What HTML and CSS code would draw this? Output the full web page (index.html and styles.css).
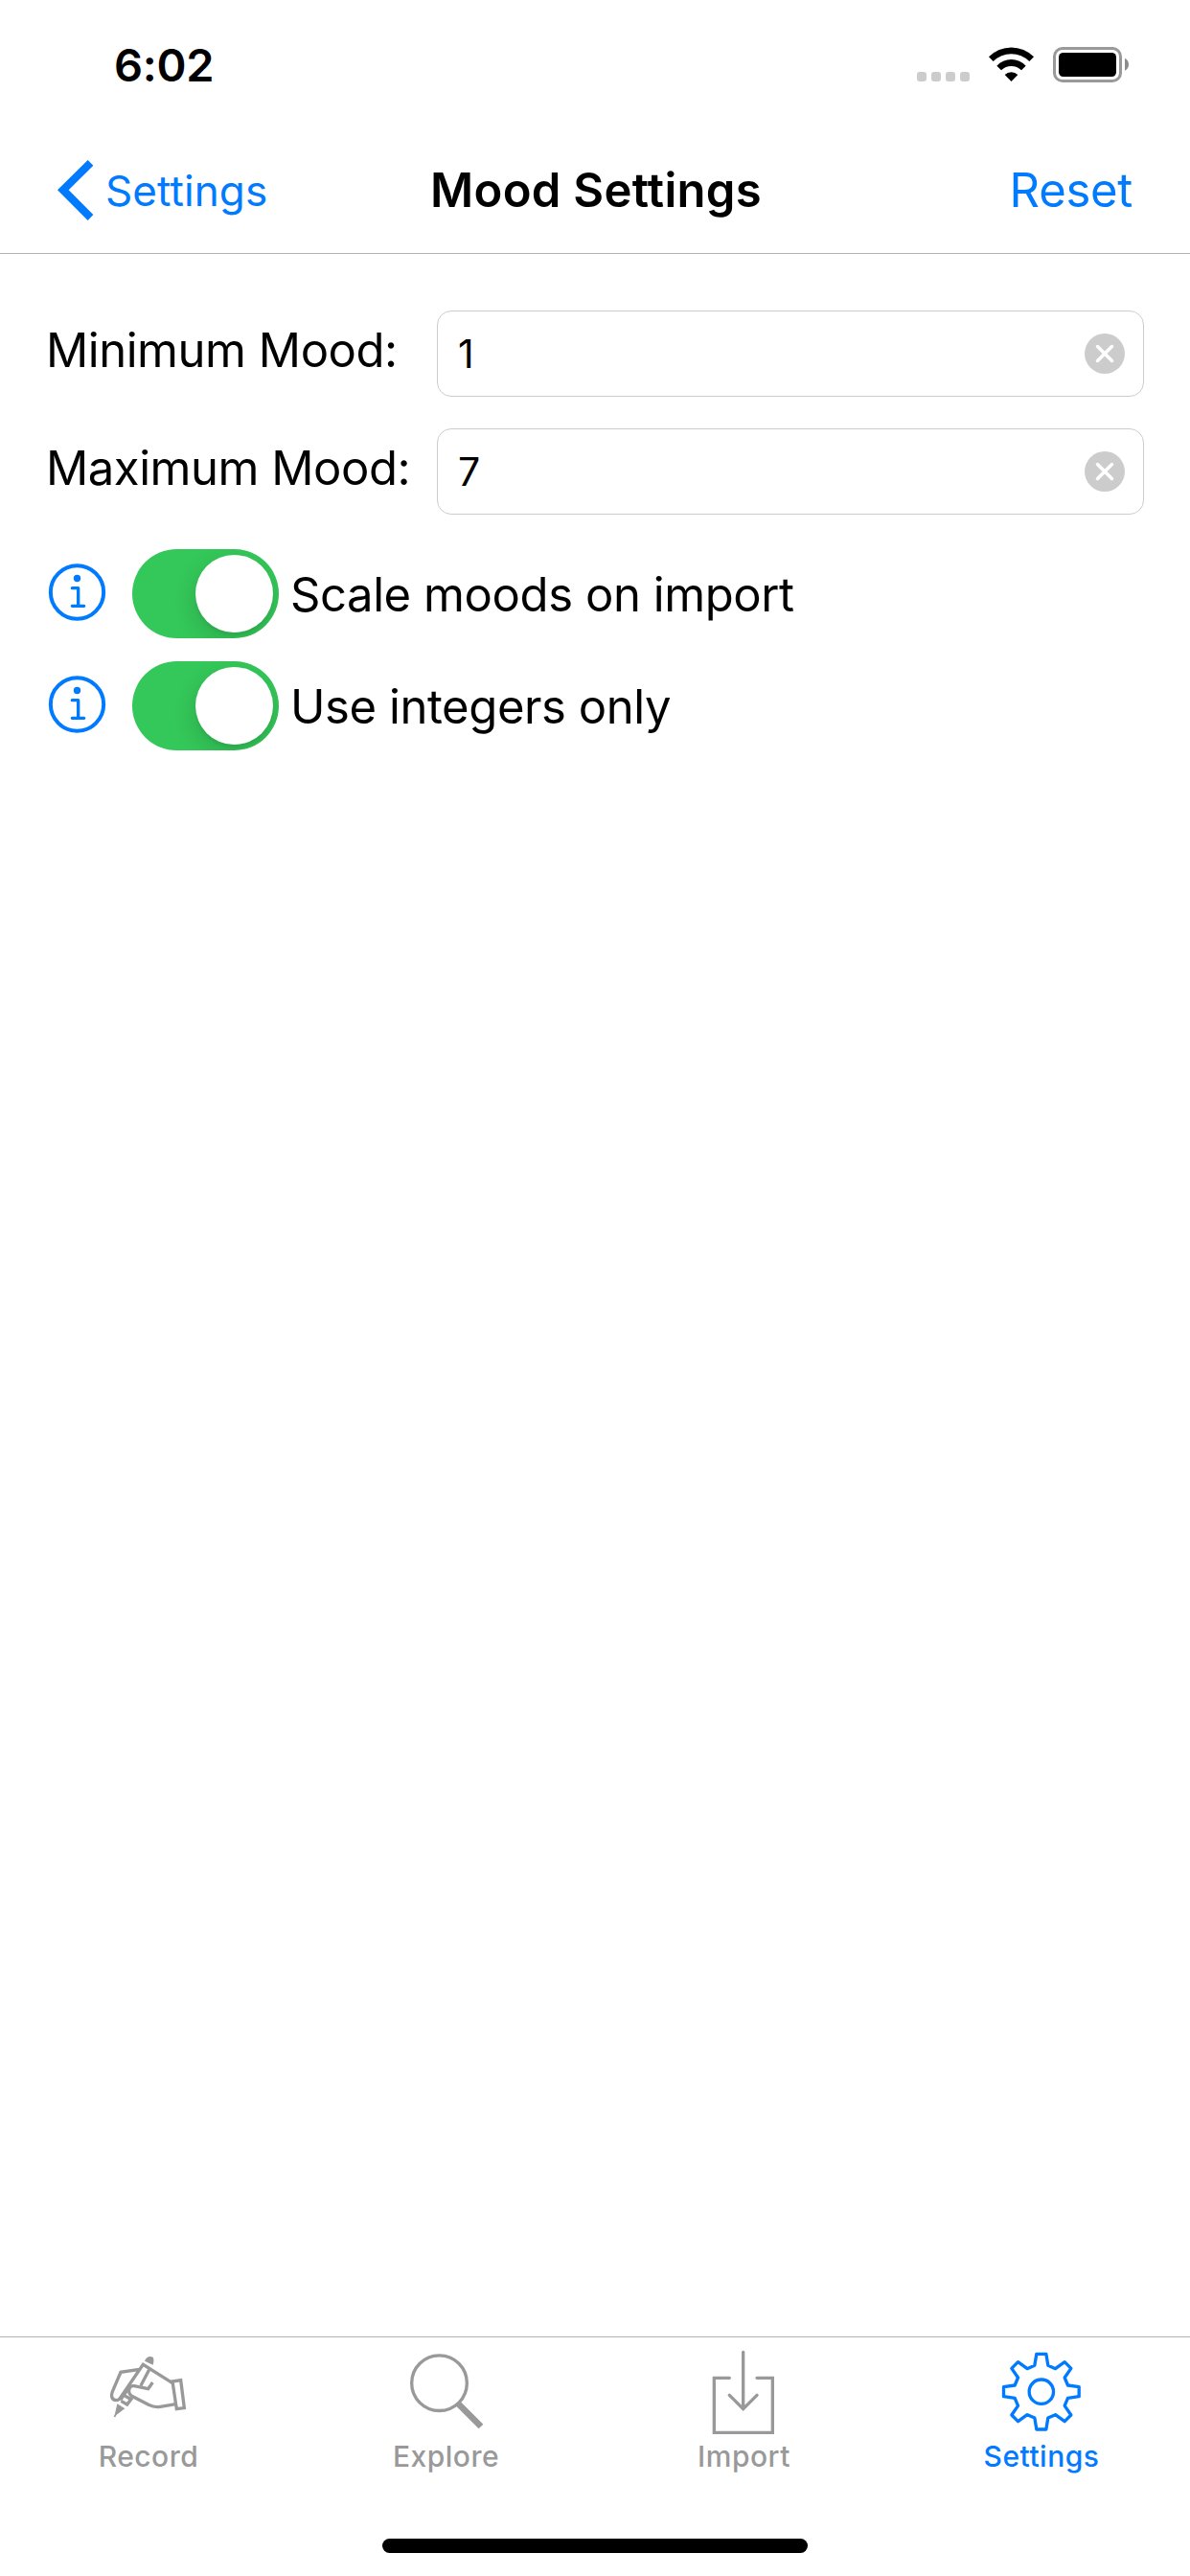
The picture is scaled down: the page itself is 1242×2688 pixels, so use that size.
FILE: index.html
```
<!DOCTYPE html>
<html lang="en">
<head>
<meta charset="utf-8">
<title>Mood Settings</title>
<link rel="stylesheet" href="styles.css">
</head>
<body>
<div class="screen">
  <header class="statusbar">
    <div class="time">6:02</div>
    <svg class="status-icons" viewBox="105 81 675 120">
      <g fill="#ccc">
        <rect x="111" y="165" width="30" height="30" rx="9"/>
        <rect x="156" y="165" width="30" height="30" rx="9"/>
        <rect x="201" y="165" width="30" height="30" rx="9"/>
        <rect x="246" y="165" width="30" height="30" rx="9"/>
      </g>
      <path d="M336 118A99 99 0 0 1 477 118L463 132A80 80 0 0 0 350 132Z"/>
      <path d="M361 146A62 62 0 0 1 452 146L438 160A44 44 0 0 0 375 160Z"/>
      <path d="M386 174A30 30 0 0 1 427 174L406.500 195Z"/>
      <rect x="541.500" y="91.500" width="207" height="102" rx="25" fill="none" stroke="#999" stroke-width="9"/>
      <rect x="555" y="105" width="180" height="75" rx="14"/>
      <path d="M762 122Q774 129 774 142Q774 155 762 161Z" fill="#8c8c8c"/>
    </svg>
  </header>

  <nav class="navbar">
    <a class="back">
      <svg class="chevron" viewBox="180 498 114 195"><path d="M275 501L292 518L215 595L292 672L275 690L180 595Z"/></svg>
      <span>Settings</span>
    </a>
    <h1 class="title">Mood Settings</h1>
    <a class="reset">Reset</a>
  </nav>

  <main class="content">
    <div class="field">
      <label class="field-label">Minimum Mood:</label>
      <div class="input">
        <span>1</span>
        <svg class="clear" viewBox="0 0 42 42"><circle cx="21" cy="21" r="21"/><path d="M13.500 13.500L28.500 28.500M28.500 13.500L13.500 28.500"/></svg>
      </div>
    </div>
    <div class="field">
      <label class="field-label">Maximum Mood:</label>
      <div class="input">
        <span>7</span>
        <svg class="clear" viewBox="0 0 42 42"><circle cx="21" cy="21" r="21"/><path d="M13.500 13.500L28.500 28.500M28.500 13.500L13.500 28.500"/></svg>
      </div>
    </div>

    <div class="option">
      <svg class="info" viewBox="60 111 183 186"><circle cx="151.500" cy="204" r="83" stroke-width="12"/><path d="M136 191H155V247M136 247H173" stroke-width="10"/><circle class="dot" cx="151.500" cy="160.500" r="11"/></svg>
      <div class="switch"><div class="knob"></div></div>
      <span class="option-label">Scale moods on import</span>
    </div>
    <div class="option">
      <svg class="info" viewBox="60 111 183 186"><circle cx="151.500" cy="204" r="83" stroke-width="12"/><path d="M136 191H155V247M136 247H173" stroke-width="10"/><circle class="dot" cx="151.500" cy="160.500" r="11"/></svg>
      <div class="switch"><div class="knob"></div></div>
      <span class="option-label">Use integers only</span>
    </div>
  </main>

  <footer class="tabbar">
    <div class="tabs">
      <a class="tab">
        <svg width="130" height="100" viewBox="0 0 390 300">
          <g fill="none" stroke="currentColor" stroke-width="10">
            <path d="M167 97L108 106L82 167C77 180 79 193 94 194C99 194 102 192 105 189L178 82L270 140"/>
            <path d="M197 98L171 148M208 138L194 158L150 149C132 147 128 170 143 181L198 209Q212 217 232 214L280 206"/>
            <path d="M109 196L128 207L144 186M107 193L140 146M118 178L137 189"/>
            <path d="M270 135L296 131L307 218L283 221Z"/>
          </g>
          <path fill="currentColor" d="M183 71C187 59 198 53 209 59C213 66 211 75 209 83ZM97 205L121 220L95 239L91 247L86 245L90 236Z"/>
        </svg>
        <span>Record</span>
      </a>
      <a class="tab">
        <svg width="151" height="100" viewBox="0 30 453 300">
          <g fill="none" stroke="currentColor">
            <circle cx="205.500" cy="170" r="86.500" stroke-width="10"/>
            <path d="M264 234L336 306" stroke-width="20"/>
          </g>
        </svg>
        <span>Explore</span>
      </a>
      <a class="tab">
        <svg width="151" height="100" viewBox="3 30 453 300">
          <g fill="none" stroke="currentColor" stroke-width="10" stroke-linecap="round">
            <path d="M184 154H136V325H319V154H270M227 73V250M184 208L227 251L270 208"/>
          </g>
        </svg>
        <span>Import</span>
      </a>
      <a class="tab active">
        <svg width="150" height="100" viewBox="6 30 450 300">
          <g fill="none" stroke="currentColor" stroke-width="10" stroke-linejoin="round" transform="translate(230.500 197)">
            <path d="M-15-118H15L21-82L44-72L73-93L93-73L73-44L83-20L118-15V15L83 20L73 44L93 73L73 93L44 72L21 82L15 118H-15L-21 82L-44 72L-73 93L-93 73L-73 44L-83 20L-118 15V-15L-83-20L-73-44L-93-73L-73-93L-44-72L-21-82Z"/>
            <circle r="38"/>
          </g>
        </svg>
        <span>Settings</span>
      </a>
    </div>
    <div class="home-indicator"></div>
  </footer>
</div>
</body>
</html>
```
FILE: styles.css
```
* { box-sizing: border-box; }

body {
  margin: 0;
  background: #fff;
  color: #000;
  font-family: Inter, "Liberation Sans", sans-serif;
}

svg { display: block; flex: none; }

.screen {
  display: flex;
  flex-direction: column;
  width: 1242px;
  height: 2688px;
}

.statusbar {
  display: flex;
  justify-content: space-between;
  height: 132px;
  padding: 38px 62px 0 119px;
}

.time {
  font-size: 47px;
  font-weight: 600;
  line-height: 60px;
  letter-spacing: -0.3px;
}

.status-icons {
  width: 225px;
  height: 40px;
  margin-top: 9px;
}

.navbar {
  display: grid;
  grid-template-columns: 389px 1fr 389px;
  height: 133px;
  padding: 0 60px;
  border-bottom: 1px solid #b2b2b2;
  line-height: 60px;
}

.back {
  display: flex;
  gap: 12px;
  padding-top: 37px;
  color: #007aff;
  font-size: 44px;
  letter-spacing: 0.1px;
}

.chevron {
  width: 38px;
  height: 65px;
  margin-top: -3px;
  fill: #007aff;
}

.title {
  margin: 0;
  padding-top: 37px;
  font-size: 49px;
  font-weight: 600;
  letter-spacing: 0.3px;
  white-space: nowrap;
}

.reset {
  padding: 37px 2px 0 0;
  color: #007aff;
  font-size: 49px;
  letter-spacing: -0.3px;
  text-align: right;
}

.content {
  display: flex;
  flex: 1;
  flex-direction: column;
  padding: 59px 48px 0;
}

.field {
  display: flex;
  align-items: center;
  height: 90px;
  margin-bottom: 33px;
}

.field-label {
  width: 408px;
  padding-bottom: 6px;
  font-size: 49px;
  line-height: 60px;
  letter-spacing: -0.46px;
  white-space: nowrap;
}

.input {
  display: flex;
  align-items: center;
  justify-content: space-between;
  flex: 1;
  height: 90px;
  padding: 0 19px 0 21px;
  border: 1px solid #ccc;
  border-radius: 15px;
  font-size: 41px;
}

.clear {
  width: 42px;
  height: 42px;
  fill: #ccc;
  stroke-linecap: round;
}

.clear path {
  stroke: #fff;
  stroke-width: 3.5px;
}

.option {
  display: flex;
  align-items: center;
  height: 93px;
  margin-top: 3px;
  margin-bottom: 21px;
}

.info {
  width: 61px;
  height: 62px;
  margin: -3px 27px 0 2px;
  fill: none;
  stroke: #007aff;
  stroke-linecap: round;
  stroke-linejoin: round;
}

.info .dot {
  fill: #007aff;
  stroke: none;
}

.switch {
  display: flex;
  justify-content: flex-end;
  width: 153px;
  height: 93px;
  padding: 6px;
  border-radius: 47px;
  background: #34c759;
  overflow: hidden;
}

.knob {
  width: 81px;
  height: 81px;
  border-radius: 50%;
  background: #fff;
  box-shadow: 0 9px 24px rgba(0, 0, 0, 0.15), 0 3px 3px rgba(0, 0, 0, 0.05);
}

.option-label {
  margin-left: 12px;
  padding-top: 2px;
  font-size: 49px;
  line-height: 60px;
  letter-spacing: -0.42px;
}

.tabbar {
  display: flex;
  flex-direction: column;
  align-items: center;
  height: 250px;
  padding-top: 1px;
  border-top: 1px solid #b2b2b2;
}

.tabs {
  display: grid;
  grid-template-columns: 310px 311px 311px 310px;
}

.tab {
  display: flex;
  flex-direction: column;
  align-items: center;
  color: #999;
  font-size: 30px;
  font-weight: 500;
  line-height: 46px;
  letter-spacing: 0.5px;
}

.active { color: #007aff; }

.home-indicator {
  width: 444px;
  height: 15px;
  margin-top: 63px;
  border-radius: 8px;
  background: #000;
}
```
